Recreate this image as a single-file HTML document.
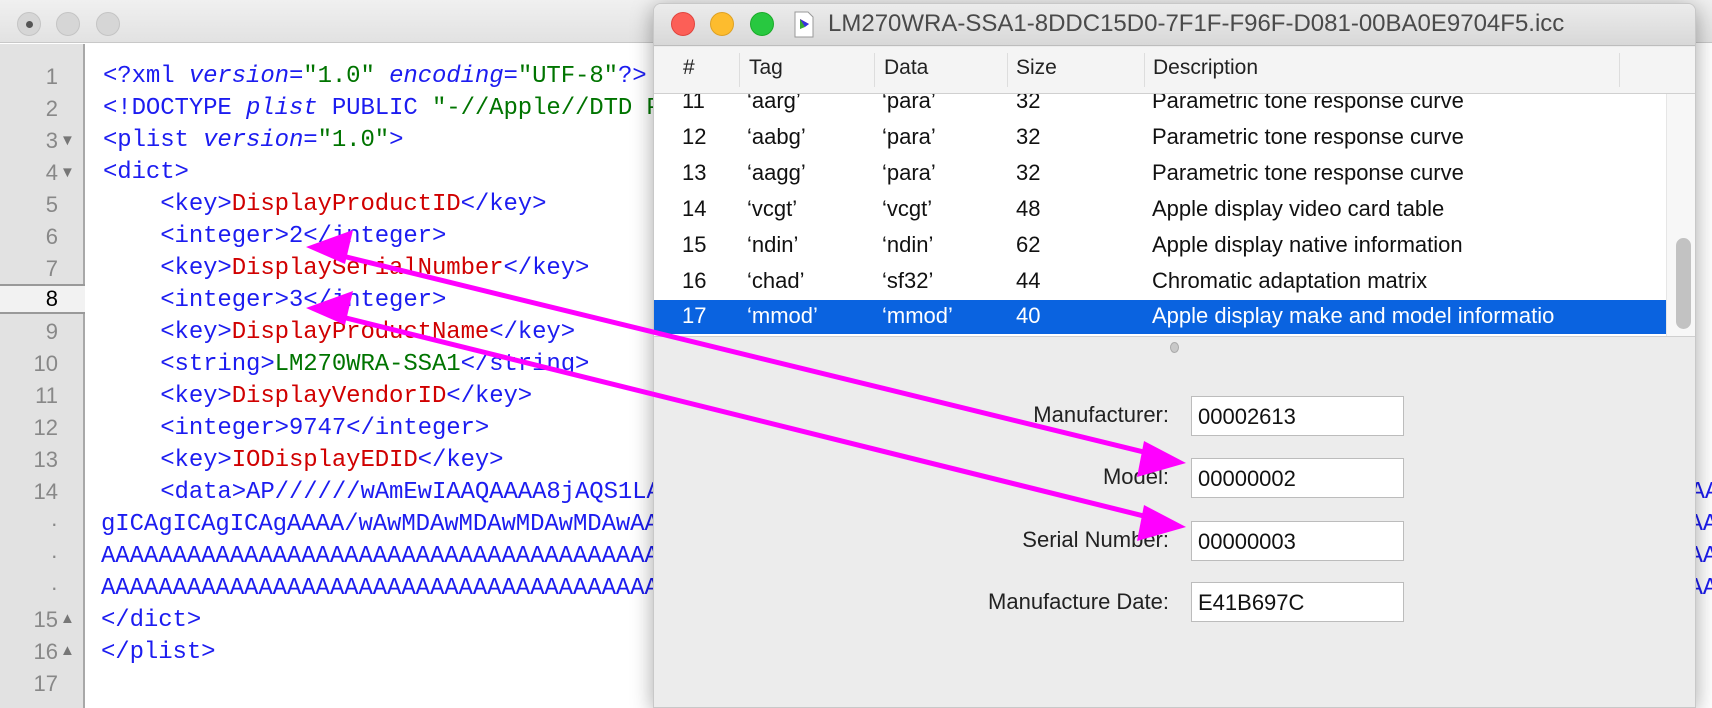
<!DOCTYPE html>
<html><head><meta charset="utf-8"><style>
*{margin:0;padding:0;box-sizing:border-box}
body{width:1712px;height:708px;overflow:hidden;background:#ececec;position:relative;font-family:"Liberation Sans",sans-serif}
#lw{position:absolute;left:0;top:0;width:1712px;height:708px;background:#fff;overflow:hidden}
#lt{position:absolute;left:0;top:0;width:1712px;height:43px;background:linear-gradient(#f0f0f0,#e2e2e2);border-bottom:1px solid #c8c8c8}
.dot{position:absolute;top:12px;width:24px;height:24px;border-radius:50%;background:#d6d6d6;border:1px solid #c4c4c4}
#gut{position:absolute;left:0;top:44px;width:85px;height:664px;background:#e2e2e2;border-right:2px solid #a8a8a8}
.ln{position:absolute;left:0;width:58px;text-align:right;font:22px "Liberation Sans",sans-serif;color:#888;height:32px;line-height:32px}
.tri{position:absolute;left:60px;font-size:15px;color:#777}
#cur{position:absolute;left:0;top:284px;width:85px;height:30px;background:#f2f2f2;border-top:2px solid #999;border-bottom:2px solid #999}
.code{position:absolute;left:103px;font:24px "Liberation Mono",monospace;white-space:pre;height:32px;line-height:32px;color:#1c1cf0;letter-spacing:-0.1px}
.r{color:#d00000}.g{color:#007400}.i{font-style:italic}
#rw{position:absolute;left:653px;top:3px;width:1043px;height:705px;background:#ececec;border:1px solid #c8c8c8;border-radius:8px 8px 0 0;box-shadow:0 4px 22px rgba(0,0,0,.35);overflow:hidden}
#rt{height:42px;background:linear-gradient(#ececec,#d8d8d8);border-bottom:1px solid #bdbdbd;position:relative}
.tl{position:absolute;top:8px;width:24px;height:24px;border-radius:50%}
#title{position:absolute;left:174px;top:6px;font-size:24px;color:#4a4a4a;white-space:nowrap}
#hdr{position:absolute;left:0;top:43px;width:1043px;height:47px;background:#f4f4f4;border-bottom:1px solid #d0d0d0;font-size:21px;color:#222}
.hc{position:absolute;top:9px}
.sep{position:absolute;top:6px;width:1px;height:34px;background:#ddd}
#tbl{position:absolute;left:0;top:90px;width:1012px;height:242px;background:#fff;overflow:hidden}
.row{position:absolute;left:0;width:1012px;height:36px;font-size:22px;color:#111}
.row span{position:absolute;top:4px}
.sel{background:#0a63e0;color:#fff}
#track{position:absolute;left:1012px;top:90px;width:31px;height:242px;background:#f7f7f7;border-left:1px solid #e6e6e6}
#knob{position:absolute;left:9px;top:144px;width:15px;height:91px;border-radius:8px;background:#c2c2c2}
#line{position:absolute;left:0;top:332px;width:1043px;height:1px;background:#cfcfcf}
.lab{position:absolute;right:526px;font-size:22px;color:#222;text-align:right;white-space:nowrap}
.fld{position:absolute;left:537px;width:213px;height:40px;background:#fff;border:1px solid #bcbcbc;font-size:22px;color:#111;padding:7px 0 0 6px}
</style></head><body>
<div id="lw">
<div id="lt"><div class="dot" style="left:17px"><div style="position:absolute;left:8px;top:8px;width:7px;height:7px;border-radius:50%;background:#555"></div></div><div class="dot" style="left:56px"></div><div class="dot" style="left:96px"></div></div>
<div id="gut"></div>
<div id="cur"></div>
<div class="ln" style="top:61px">1</div><div class="ln" style="top:93px">2</div><div class="ln" style="top:125px">3</div><div class="ln" style="top:157px">4</div><div class="ln" style="top:189px">5</div><div class="ln" style="top:221px">6</div><div class="ln" style="top:253px">7</div><div class="ln" style="top:283px;color:#000">8</div><div class="ln" style="top:316px">9</div><div class="ln" style="top:348px">10</div><div class="ln" style="top:380px">11</div><div class="ln" style="top:412px">12</div><div class="ln" style="top:444px">13</div><div class="ln" style="top:476px">14</div><div class="ln" style="top:508px">·</div><div class="ln" style="top:540px">·</div><div class="ln" style="top:572px">·</div><div class="ln" style="top:604px">15</div><div class="ln" style="top:636px">16</div><div class="ln" style="top:668px">17</div>
<div class="tri" style="top:132px">▼</div><div class="tri" style="top:164px">▼</div><div class="tri" style="top:610px">▲</div><div class="tri" style="top:642px">▲</div>
<div class="code" style="top:61px">&lt;?xml <span class="i">version</span>=<span class="g">"1.0"</span> <span class="i">encoding</span>=<span class="g">"UTF-8"</span>?&gt;</div>
<div class="code" style="top:93px">&lt;!DOCTYPE <span class="i">plist</span> PUBLIC <span class="g">"-//Apple//DTD PLIST 1.0//EN"</span></div>
<div class="code" style="top:125px">&lt;plist <span class="i">version</span>=<span class="g">"1.0"</span>&gt;</div>
<div class="code" style="top:157px">&lt;dict&gt;</div>
<div class="code" style="top:189px">    &lt;key&gt;<span class="r">DisplayProductID</span>&lt;/key&gt;</div>
<div class="code" style="top:221px">    &lt;integer&gt;2&lt;/integer&gt;</div>
<div class="code" style="top:253px">    &lt;key&gt;<span class="r">DisplaySerialNumber</span>&lt;/key&gt;</div>
<div class="code" style="top:285px">    &lt;integer&gt;3&lt;/integer&gt;</div>
<div class="code" style="top:317px">    &lt;key&gt;<span class="r">DisplayProductName</span>&lt;/key&gt;</div>
<div class="code" style="top:349px">    &lt;string&gt;<span class="g">LM270WRA-SSA1</span>&lt;/string&gt;</div>
<div class="code" style="top:381px">    &lt;key&gt;<span class="r">DisplayVendorID</span>&lt;/key&gt;</div>
<div class="code" style="top:413px">    &lt;integer&gt;9747&lt;/integer&gt;</div>
<div class="code" style="top:445px">    &lt;key&gt;<span class="r">IODisplayEDID</span>&lt;/key&gt;</div>
<div class="code" style="top:477px">    &lt;data&gt;AP//////wAmEwIAAQAAAA8jAQS1LAQEBAQEBAQEBAQEBAQEBAQEBAQEBAQEBAQEBAQEBAQEBAQEBAQEBAQEBAQEBAQEBAQEB/CAAAAAAAAAAAAAAAAAAAA</div>
<div class="code" style="top:509px;left:101px">gICAgICAgICAgAAAA/wAwMDAwMDAwMDAwMDAwAAAAAAAAAAAAAAAAAAAAAAAAAAAAAAAAAAAAAAAAAAAAAAAAAAAAAAAAAAAAAAAAAAAAAAAAAAAAAAAAAAAAADIAAAAAAAAAAAAAAAAAAAAAA</div>
<div class="code" style="top:541px;left:101px">AAAAAAAAAAAAAAAAAAAAAAAAAAAAAAAAAAAAAAAAAAAAAAAAAAAAAAAAAAAAAAAAAAAAAAAAAAAAAAAAAAAAAAAAAAAAAAAAAAAAAAAAAAAAAAAAAAAAAAAAAAAAAAAAAAAAAAAAAAA</div>
<div class="code" style="top:573px;left:101px">AAAAAAAAAAAAAAAAAAAAAAAAAAAAAAAAAAAAAAAAAAAAAAAAAAAAAAAAAAAAAAAAAAAAAAAAAAAAAAAAAAAAAAAAAAAAAAAAAAAAAAAAAAAAAAAAAAAAAAAAAAAAAAAAAAAAAAAAAAA</div>
<div class="code" style="top:605px;left:101px">&lt;/dict&gt;</div>
<div class="code" style="top:637px;left:101px">&lt;/plist&gt;</div>
</div>
<div id="rw">
<div id="rt">
<div class="tl" style="left:17px;background:#fc5f57;border:1px solid #e0443e"></div>
<div class="tl" style="left:56px;background:#fdbc2e;border:1px solid #dea123"></div>
<div class="tl" style="left:96px;background:#28c840;border:1px solid #1aab29"></div>
<svg style="position:absolute;left:140px;top:7px" width="20" height="27" viewBox="0 0 20 27"><path d="M1 1h13l5 5v20H1z" fill="#fff" stroke="#999"/><path d="M6 8l9 5-9 5z" fill="#e33"/><path d="M6 8l5 8-5 2z" fill="#3a3"/><path d="M6 8l9 5-4 3z" fill="#33d"/></svg>
<div id="title">LM270WRA-SSA1-8DDC15D0-7F1F-F96F-D081-00BA0E9704F5.icc</div>
</div>
<div id="hdr">
<div class="hc" style="left:29px">#</div><div class="sep" style="left:85px"></div>
<div class="hc" style="left:95px">Tag</div><div class="sep" style="left:220px"></div>
<div class="hc" style="left:230px">Data</div><div class="sep" style="left:353px"></div>
<div class="hc" style="left:362px">Size</div><div class="sep" style="left:490px"></div>
<div class="hc" style="left:499px">Description</div><div class="sep" style="left:965px"></div>
</div>
<div id="tbl">
<div class="row" style="top:-10px"><span style="left:28px">11</span><span style="left:93px">‘aarg’</span><span style="left:228px">‘para’</span><span style="left:362px">32</span><span style="left:498px">Parametric tone response curve</span></div>
<div class="row" style="top:26px"><span style="left:28px">12</span><span style="left:93px">‘aabg’</span><span style="left:228px">‘para’</span><span style="left:362px">32</span><span style="left:498px">Parametric tone response curve</span></div>
<div class="row" style="top:62px"><span style="left:28px">13</span><span style="left:93px">‘aagg’</span><span style="left:228px">‘para’</span><span style="left:362px">32</span><span style="left:498px">Parametric tone response curve</span></div>
<div class="row" style="top:98px"><span style="left:28px">14</span><span style="left:93px">‘vcgt’</span><span style="left:228px">‘vcgt’</span><span style="left:362px">48</span><span style="left:498px">Apple display video card table</span></div>
<div class="row" style="top:134px"><span style="left:28px">15</span><span style="left:93px">‘ndin’</span><span style="left:228px">‘ndin’</span><span style="left:362px">62</span><span style="left:498px">Apple display native information</span></div>
<div class="row" style="top:170px"><span style="left:28px">16</span><span style="left:93px">‘chad’</span><span style="left:228px">‘sf32’</span><span style="left:362px">44</span><span style="left:498px">Chromatic adaptation matrix</span></div>
<div class="row sel" style="top:206px;height:34px"><span style="left:28px;top:3px">17</span><span style="left:93px;top:3px">‘mmod’</span><span style="left:228px;top:3px">‘mmod’</span><span style="left:362px;top:3px">40</span><span style="left:498px;top:3px">Apple display make and model informatio</span></div>
</div>
<div id="track"><div id="knob"></div></div>
<div id="line"></div>
<div style="position:absolute;left:516px;top:338px;width:9px;height:11px;border-radius:50%;background:#c8c8c8;border:1px solid #aaa"></div>
<div class="lab" style="top:398px">Manufacturer:</div><div class="fld" style="top:392px">00002613</div>
<div class="lab" style="top:460px">Model:</div><div class="fld" style="top:454px">00000002</div>
<div class="lab" style="top:523px">Serial Number:</div><div class="fld" style="top:517px">00000003</div>
<div class="lab" style="top:585px">Manufacture Date:</div><div class="fld" style="top:578px">E41B697C</div>
</div>
<svg style="position:absolute;left:0;top:0" width="1712" height="708">
<g stroke="#ff00ff" stroke-width="5" fill="#ff00ff">
<line x1="330" y1="253" x2="1160" y2="456"/>
<line x1="330" y1="314" x2="1160" y2="520"/>
<polygon stroke="none" points="306,247 353,230 345,264"/>
<polygon stroke="none" points="306,308 353,291 345,325"/>
<polygon stroke="none" points="1186,463 1137,477 1144,441"/>
<polygon stroke="none" points="1186,527 1137,541 1144,505"/>
</g></svg>
</body></html>
